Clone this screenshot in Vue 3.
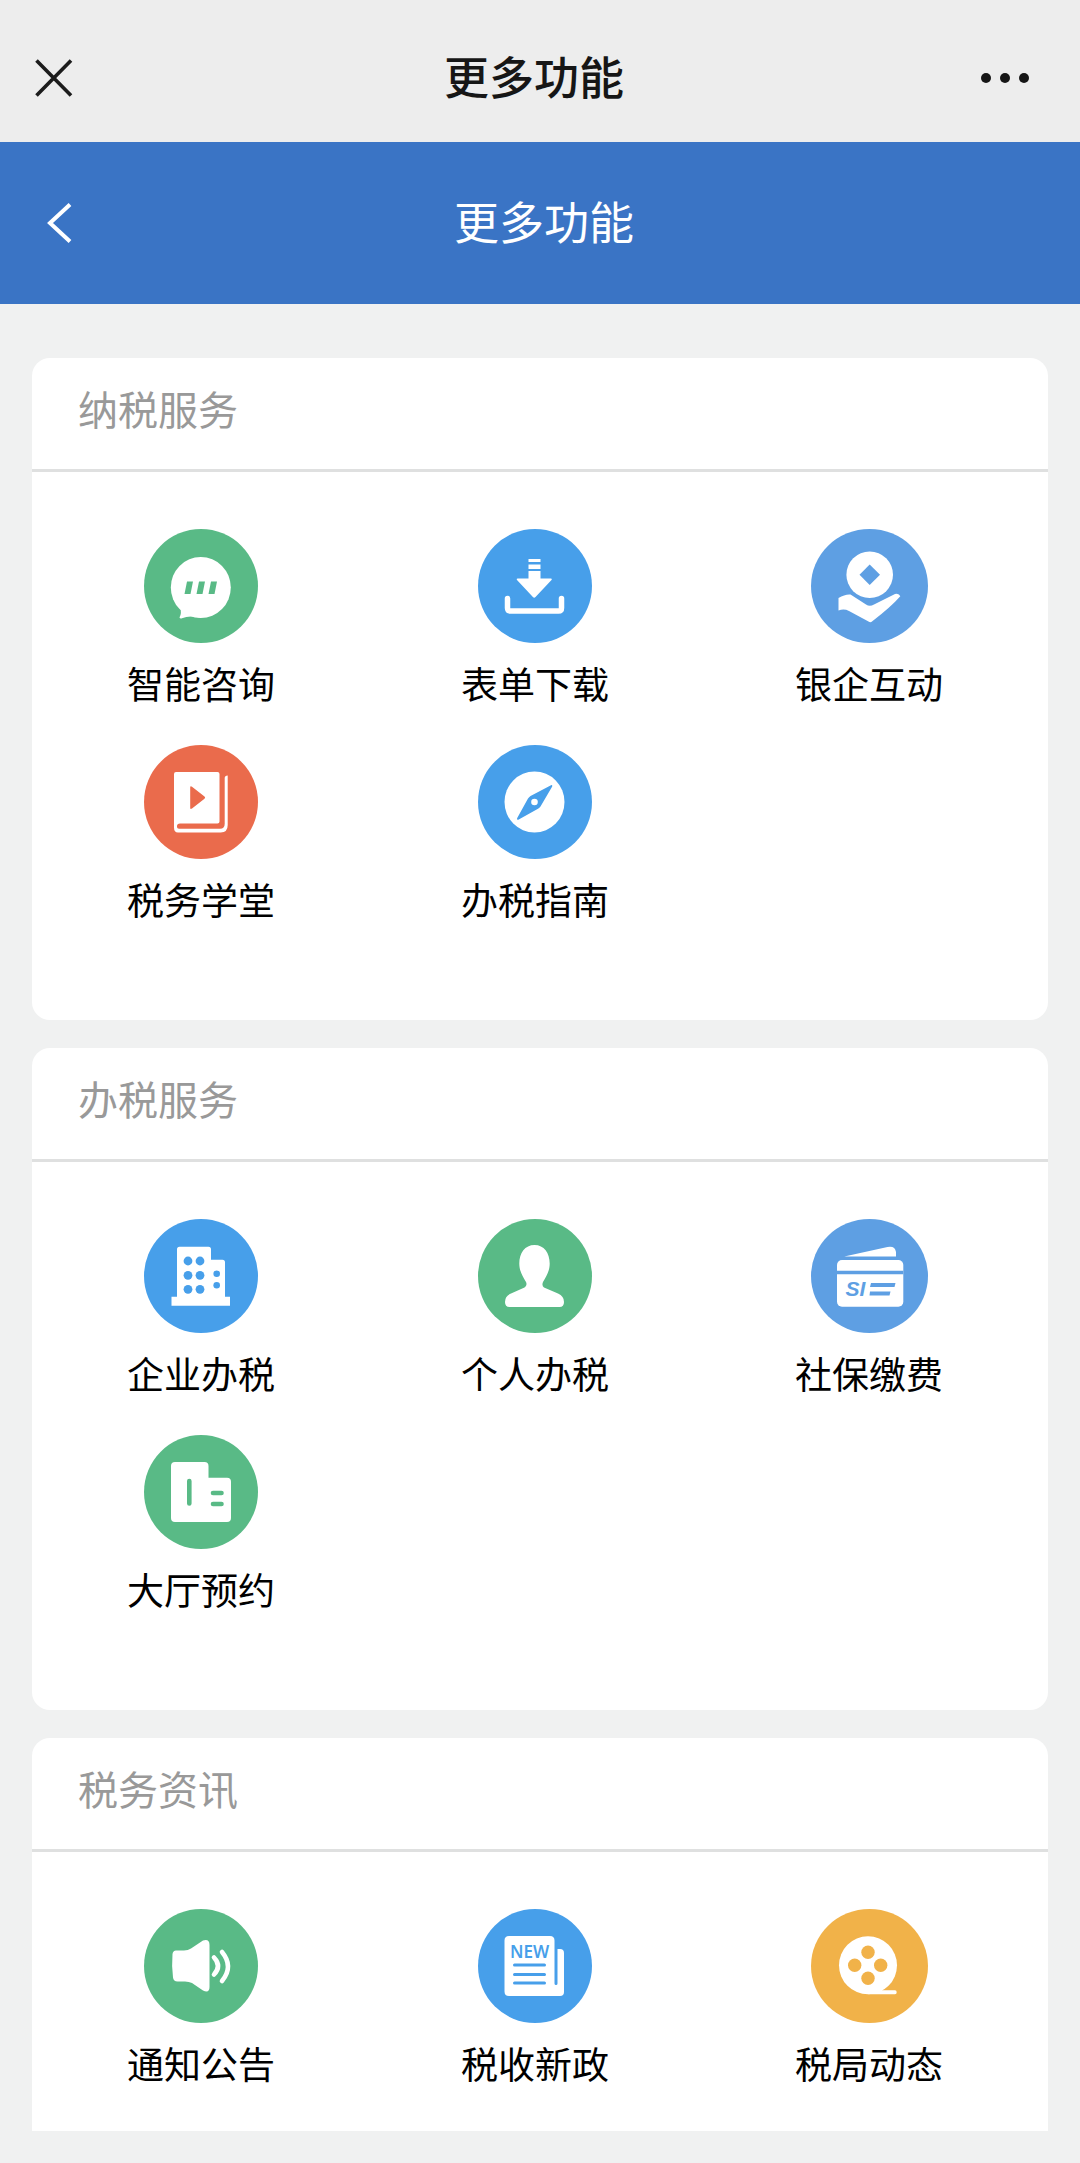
<script setup>
const sections = [
  {
    title: '纳税服务',
    items: [
      { label: '智能咨询', icon: 'chat', tone: 'green' },
      { label: '表单下载', icon: 'download', tone: 'blue' },
      { label: '银企互动', icon: 'coin', tone: 'steel' },
      { label: '税务学堂', icon: 'book', tone: 'red' },
      { label: '办税指南', icon: 'compass', tone: 'blue' }
    ]
  },
  {
    title: '办税服务',
    items: [
      { label: '企业办税', icon: 'building', tone: 'blue' },
      { label: '个人办税', icon: 'person', tone: 'green' },
      { label: '社保缴费', icon: 'card', tone: 'steel' },
      { label: '大厅预约', icon: 'hall', tone: 'green' }
    ]
  },
  {
    title: '税务资讯',
    items: [
      { label: '通知公告', icon: 'speaker', tone: 'green' },
      { label: '税收新政', icon: 'news', tone: 'blue' },
      { label: '税局动态', icon: 'film', tone: 'orange' }
    ]
  }
]

// The third column's artwork is slightly wider than tall.
const iconWidth = (index) => (index % 3 === 2 ? 117 : 114)
</script>

<template>
  <div class="page">
    <header class="titlebar">
      <button class="bar-button close" type="button" aria-label="关闭">
        <svg width="38" height="38" viewBox="0 0 38 38">
          <path d="M1.500 1.500L36 36.500M36 1.500L1.500 36.500" fill="none" stroke="#1c1c1c" stroke-width="3.600" />
        </svg>
      </button>
      <div class="bar-title strong">更多功能</div>
      <button class="bar-button more" type="button" aria-label="更多">
        <svg width="50" height="12" viewBox="0 0 50 12">
          <circle cx="5" cy="6" r="5" fill="#161616" />
          <circle cx="24" cy="6" r="5" fill="#161616" />
          <circle cx="43" cy="6" r="5" fill="#161616" />
        </svg>
      </button>
    </header>

    <nav class="navbar">
      <button class="bar-button back" type="button" aria-label="返回">
        <svg width="26" height="40" viewBox="0 0 26 40">
          <path d="M23 1.500L3 20L23 38.500" fill="none" stroke="#fff" stroke-width="4" />
        </svg>
      </button>
      <h1 class="bar-title">更多功能</h1>
      <span class="nav-end"></span>
    </nav>

    <main class="content">
      <section v-for="section in sections" :key="section.title" class="card">
        <h2 class="card-title">{{ section.title }}</h2>
        <div class="grid">
          <a
            v-for="(item, index) in section.items"
            :key="item.label"
            class="item"
            :class="item.tone"
            href="#"
          >
            <svg
              class="icon"
              :width="iconWidth(index)"
              height="114"
              :viewBox="`0 0 ${iconWidth(index)} 114`"
              aria-hidden="true"
            >
              <ellipse :cx="iconWidth(index) / 2" cy="57" :rx="iconWidth(index) / 2" ry="57" fill="currentColor" />

              <g v-if="item.icon === 'chat'">
                <ellipse cx="56.800" cy="58.500" rx="30" ry="30.500" fill="#fff" />
                <path d="M36 78Q38 84 35.500 88.500Q36 89.800 38 89.200Q46 86 57 89z" fill="#fff" />
                <path d="M43 52.500h6l-2.500 12.500h-6zM55 52.500h6l-2.500 12.500h-6zM67 52.500h6l-2.500 12.500h-6z" fill="currentColor" />
              </g>

              <g v-else-if="item.icon === 'download'" fill="#fff">
                <path d="M50.500 30h12v3h-12zM50.500 35.500h12v4.500h-12zM50.500 42h12v7.500H73q1.500 0 .5 1.500L57.500 68q-1.300 1.500-2.600 0L39 51q-1-1.500.5-1.500h11z" />
                <path d="M29.500 69.500V79q0 3 3 3h48q3 0 3-3V69.500" fill="none" stroke="#fff" stroke-width="5.500" stroke-linecap="round" />
              </g>

              <g v-else-if="item.icon === 'coin'">
                <circle cx="58.700" cy="45.700" r="23.300" fill="#fff" />
                <path d="M58.700 35.500L69 45.700L58.700 56L48.500 45.700z" fill="currentColor" />
                <path d="M27.500 69Q34 65 39.500 65.500L55 75.500Q58.700 78 63 75.500L84 65Q88 64 89.300 67.300Q80 78 61 92.500Q59.500 94 57.500 92.500L38 82Q33 79.500 27.500 81.500z" fill="#fff" />
              </g>

              <g v-else-if="item.icon === 'book'">
                <path d="M32 27h41.500q2 0 2 2v47.500q0 2-2 2H36q-3 0-3 2.500v1q0 1.700 2 1.700h41q4.700 0 4.700-5V33q0-2.500 3-2.500V80q0 7.500-7 7.500H34q-4 0-4-5V29q0-2 2-2z" fill="#fff" />
                <path d="M46.200 42.500q0-2 1.800-.8L60.500 51.500q1.300 1 0 2.200L48 63.500q-1.800 1.200-1.800-.8z" fill="currentColor" />
              </g>

              <g v-else-if="item.icon === 'compass'">
                <ellipse cx="56.500" cy="57" rx="30" ry="30.500" fill="#fff" />
                <path d="M73 40.200q1.600-.4 1.200 1.200L62.500 61.500Q61.500 63 60 63.700L40.300 74.800q-1.800.2-1.200-1.600L50 53.500Q51 52 52.500 51z" fill="currentColor" />
                <circle cx="56.500" cy="57" r="3.300" fill="#fff" />
              </g>

              <g v-else-if="item.icon === 'building'">
                <path d="M35.500 27.700H64.500q2.500 0 2.500 2.500V40.700H78.500q2.500 0 2.500 2.500V77.700H86V86.700H27.500V77.700H33V30.200q0-2.500 2.500-2.500z" fill="#fff" />
                <g fill="currentColor">
                  <circle cx="44" cy="42" r="4.400" />
                  <circle cx="56" cy="42" r="4.400" />
                  <circle cx="44" cy="56.300" r="4.400" />
                  <circle cx="56" cy="56.300" r="4.400" />
                  <circle cx="44" cy="70.300" r="4.400" />
                  <circle cx="56" cy="70.300" r="4.400" />
                  <circle cx="72.700" cy="54.700" r="3.300" />
                  <circle cx="72.700" cy="66.300" r="3.300" />
                </g>
              </g>

              <path
                v-else-if="item.icon === 'person'"
                d="M56.500 26C66 26 71.700 34 71.700 44.500C71.700 52 68.500 57 65 63Q63.500 66.500 66 68.500L80 74.500Q86 77 86 83Q86 88 81.500 88H31.500Q27 88 27 83Q27 77 33 74.500L46.500 68.500Q49.500 66.500 48 63C44.500 57 41.300 52 41.300 44.500C41.300 34 47 26 56.500 26z"
                fill="#fff"
              />

              <g v-else-if="item.icon === 'card'">
                <path d="M33.300 37.500L76.500 28q7.500-1.500 8.500 5v4.500z" fill="#fff" />
                <rect x="26" y="41" width="66.300" height="46.700" rx="5" fill="#fff" />
                <path d="M26 51.800h66.300v3.500H26z" fill="currentColor" />
                <text class="mark-si" x="34.500" y="77" fill="currentColor">SI</text>
                <path d="M60 64h24.500l-1 4H59zM59 72.500h20.500l-1 4H58.500z" fill="currentColor" />
              </g>

              <g v-else-if="item.icon === 'hall'">
                <path d="M31 27H60.500q4 0 4 4V42.700H83q4 0 4 4V83q0 4-4 4H31q-4 0-4-4V31q0-4 4-4z" fill="#fff" />
                <path d="M45.300 46V68.500M69 58h8.500M69 69h8.500" stroke="currentColor" stroke-width="4.600" stroke-linecap="round" />
              </g>

              <g v-else-if="item.icon === 'speaker'">
                <path d="M32 41.500H40Q44 41.500 47 39.500L59 31.500Q65.500 29.500 65.500 36V78Q65.500 84.500 59 81.500L48 74Q45 72.500 41 72.500H33.500Q29.500 72.500 29 68.500Q27.500 57 28.500 45Q29 41.500 32 41.500z" fill="#fff" />
                <path d="M70 48.500q8 8.500 0 17M78 43q12 14.500 0 29" fill="none" stroke="#fff" stroke-width="4.600" stroke-linecap="round" />
              </g>

              <g v-else-if="item.icon === 'news'">
                <path d="M31 27H72q4.500 0 4.500 4.500V74.500q0 1.500 1.500 1.500t1.500-1.500V40H82q4 0 4 4V83q0 4-4 4H31q-4.500 0-4.500-4.500V31.500Q26.500 27 31 27z" fill="#fff" />
                <text class="mark-new" x="32" y="48.500" fill="currentColor">NEW</text>
                <path d="M36.500 56h30M36.500 65.500h30M36.500 74h30" stroke="currentColor" stroke-width="3" stroke-linecap="round" />
              </g>

              <g v-else-if="item.icon === 'film'">
                <circle cx="57" cy="56.300" r="29" fill="#fff" />
                <path d="M75 76L71 81.200H84q1.700 0 1.700 2T84 85.200H57z" fill="#fff" />
                <g fill="currentColor">
                  <circle cx="57" cy="43.300" r="6.700" />
                  <circle cx="57" cy="69.300" r="6.700" />
                  <circle cx="43.700" cy="56.300" r="6.700" />
                  <circle cx="69.700" cy="56.300" r="6.700" />
                </g>
              </g>
            </svg>
            <span class="label">{{ item.label }}</span>
          </a>
        </div>
      </section>
    </main>
  </div>
</template>

<style>
body {
  margin: 0;
  background: #f0f1f1;
}
</style>

<style scoped>
.page {
  font-family: "Noto Sans CJK SC", "Noto Sans", sans-serif;
  color: #000;
}

.titlebar,
.navbar {
  display: flex;
  align-items: center;
  box-sizing: border-box;
}

.titlebar {
  height: 142px;
  padding: 14px 29px 0 35px;
  background: #ededed;
}

.navbar {
  height: 162px;
  padding: 0 39px 0 47px;
  background: #3a74c5;
  color: #fff;
}

.bar-button {
  display: flex;
  align-items: center;
  width: 50px;
  height: 50px;
  padding: 0;
  border: 0;
  background: none;
}

.more {
  justify-content: flex-end;
}

.titlebar .more {
  margin-right: 20px;
}

.titlebar .close {
  margin-right: 2px;
}

.nav-end {
  width: 50px;
}

.bar-title {
  flex: 1;
  margin: 0;
  padding-bottom: 4px;
  font-size: 45px;
  line-height: 60px;
  font-weight: 400;
  text-align: center;
}

.bar-title.strong {
  font-weight: 500;
  color: #161616;
}

.content {
  display: flex;
  flex-direction: column;
  gap: 28px;
  padding: 54px 32px 33px;
}

.card {
  border-radius: 18px;
  background: #fff;
}

.card:last-child {
  border-radius: 18px 18px 0 0;
}

.card-title {
  margin: 0;
  padding: 20px 46px 31px;
  border-bottom: 3px solid #dfe0e0;
  font-size: 40px;
  line-height: 60px;
  font-weight: 400;
  color: #999;
}

.grid {
  display: grid;
  grid-template-columns: repeat(3, 1fr);
  row-gap: 36px;
  padding: 57px 12px 95px 2px;
}

.card:last-child .grid {
  padding-bottom: 42px;
}

.item {
  display: flex;
  flex-direction: column;
  align-items: center;
  gap: 14px;
  text-decoration: none;
}

.icon {
  display: block;
}

.label {
  font-size: 37px;
  line-height: 52px;
  color: #000;
}

.green {
  color: #59ba86;
}

.blue {
  color: #479fea;
}

.steel {
  color: #5e9fe3;
}

.red {
  color: #ea6b4c;
}

.orange {
  color: #f1b249;
}

.mark-si {
  font-family: "Liberation Sans", sans-serif;
  font-size: 21px;
  font-weight: 700;
  font-style: italic;
}

.mark-new {
  font-family: "Noto Sans", sans-serif;
  font-size: 17px;
  font-weight: 600;
}
</style>
